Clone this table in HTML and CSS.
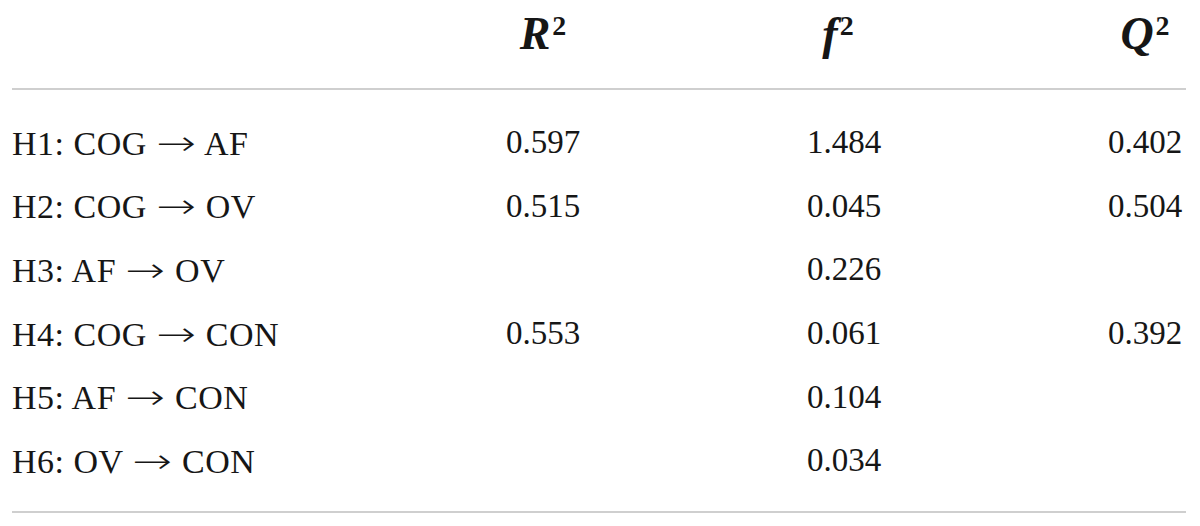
FILE: index.html
```html
<!DOCTYPE html>
<html>
<head>
<meta charset="utf-8">
<link rel="stylesheet" href="styles.css">
</head>
<body>
<div class="table">
  <div class="row head">
    <div class="c1"></div>
    <div class="c2"><i>R</i><sup>2</sup></div>
    <div class="c3"><i>f</i><sup>2</sup></div>
    <div class="c4"><i>Q</i><sup>2</sup></div>
  </div>
  <div class="body">
    <div class="row"><div class="c1">H1: COG <span class="arr">→</span> AF</div><div class="c2">0.597</div><div class="c3">1.484</div><div class="c4">0.402</div></div>
    <div class="row"><div class="c1">H2: COG <span class="arr">→</span> OV</div><div class="c2">0.515</div><div class="c3">0.045</div><div class="c4">0.504</div></div>
    <div class="row"><div class="c1">H3: AF <span class="arr">→</span> OV</div><div class="c2"></div><div class="c3">0.226</div><div class="c4"></div></div>
    <div class="row"><div class="c1">H4: COG <span class="arr">→</span> CON</div><div class="c2">0.553</div><div class="c3">0.061</div><div class="c4">0.392</div></div>
    <div class="row"><div class="c1">H5: AF <span class="arr">→</span> CON</div><div class="c2"></div><div class="c3">0.104</div><div class="c4"></div></div>
    <div class="row"><div class="c1">H6: OV <span class="arr">→</span> CON</div><div class="c2"></div><div class="c3">0.034</div><div class="c4"></div></div>
  </div>
</div>
</body>
</html>
```
FILE: styles.css
```css
html, body {
  margin: 0;
  padding: 0;
  background: #fff;
}
body {
  font-family: "Liberation Serif", "Times New Roman", serif;
  color: #161616;
}
.table {
  margin-left: 12px;
  width: 1174px;
}
.row {
  display: grid;
  grid-template-columns: 490px 82px 1fr 82px;
  align-items: center;
  font-size: 33px;
  height: 63.6px;
}
.row > .c2,
.row > .c3,
.row > .c4 {
  text-align: center;
  white-space: nowrap;
}
.c1 {
  white-space: nowrap;
  font-size: 34px;
  letter-spacing: 0.5px;
}
.arr {
  display: inline-block;
  font-family: "DejaVu Sans", sans-serif;
  font-weight: 200;
  transform: scaleX(1.4);
  margin: 0 6px;
}
.head {
  height: 88px;
  border-bottom: 2px solid #cfcfcf;
  font-size: 46px;
  font-weight: bold;
  align-items: start;
}
.head > div {
  padding-top: 8px;
  line-height: 52px;
  height: 52px;
}
.head > .c3 {
  padding-right: 12px;
}
.head sup {
  font-size: 28px;
  vertical-align: 14px;
  line-height: 0;
  font-weight: bold;
  margin-left: 2px;
}
.head i {
  font-style: italic;
}
.body {
  padding-top: 21px;
  padding-bottom: 18px;
  border-bottom: 2px solid #cfcfcf;
}
```
